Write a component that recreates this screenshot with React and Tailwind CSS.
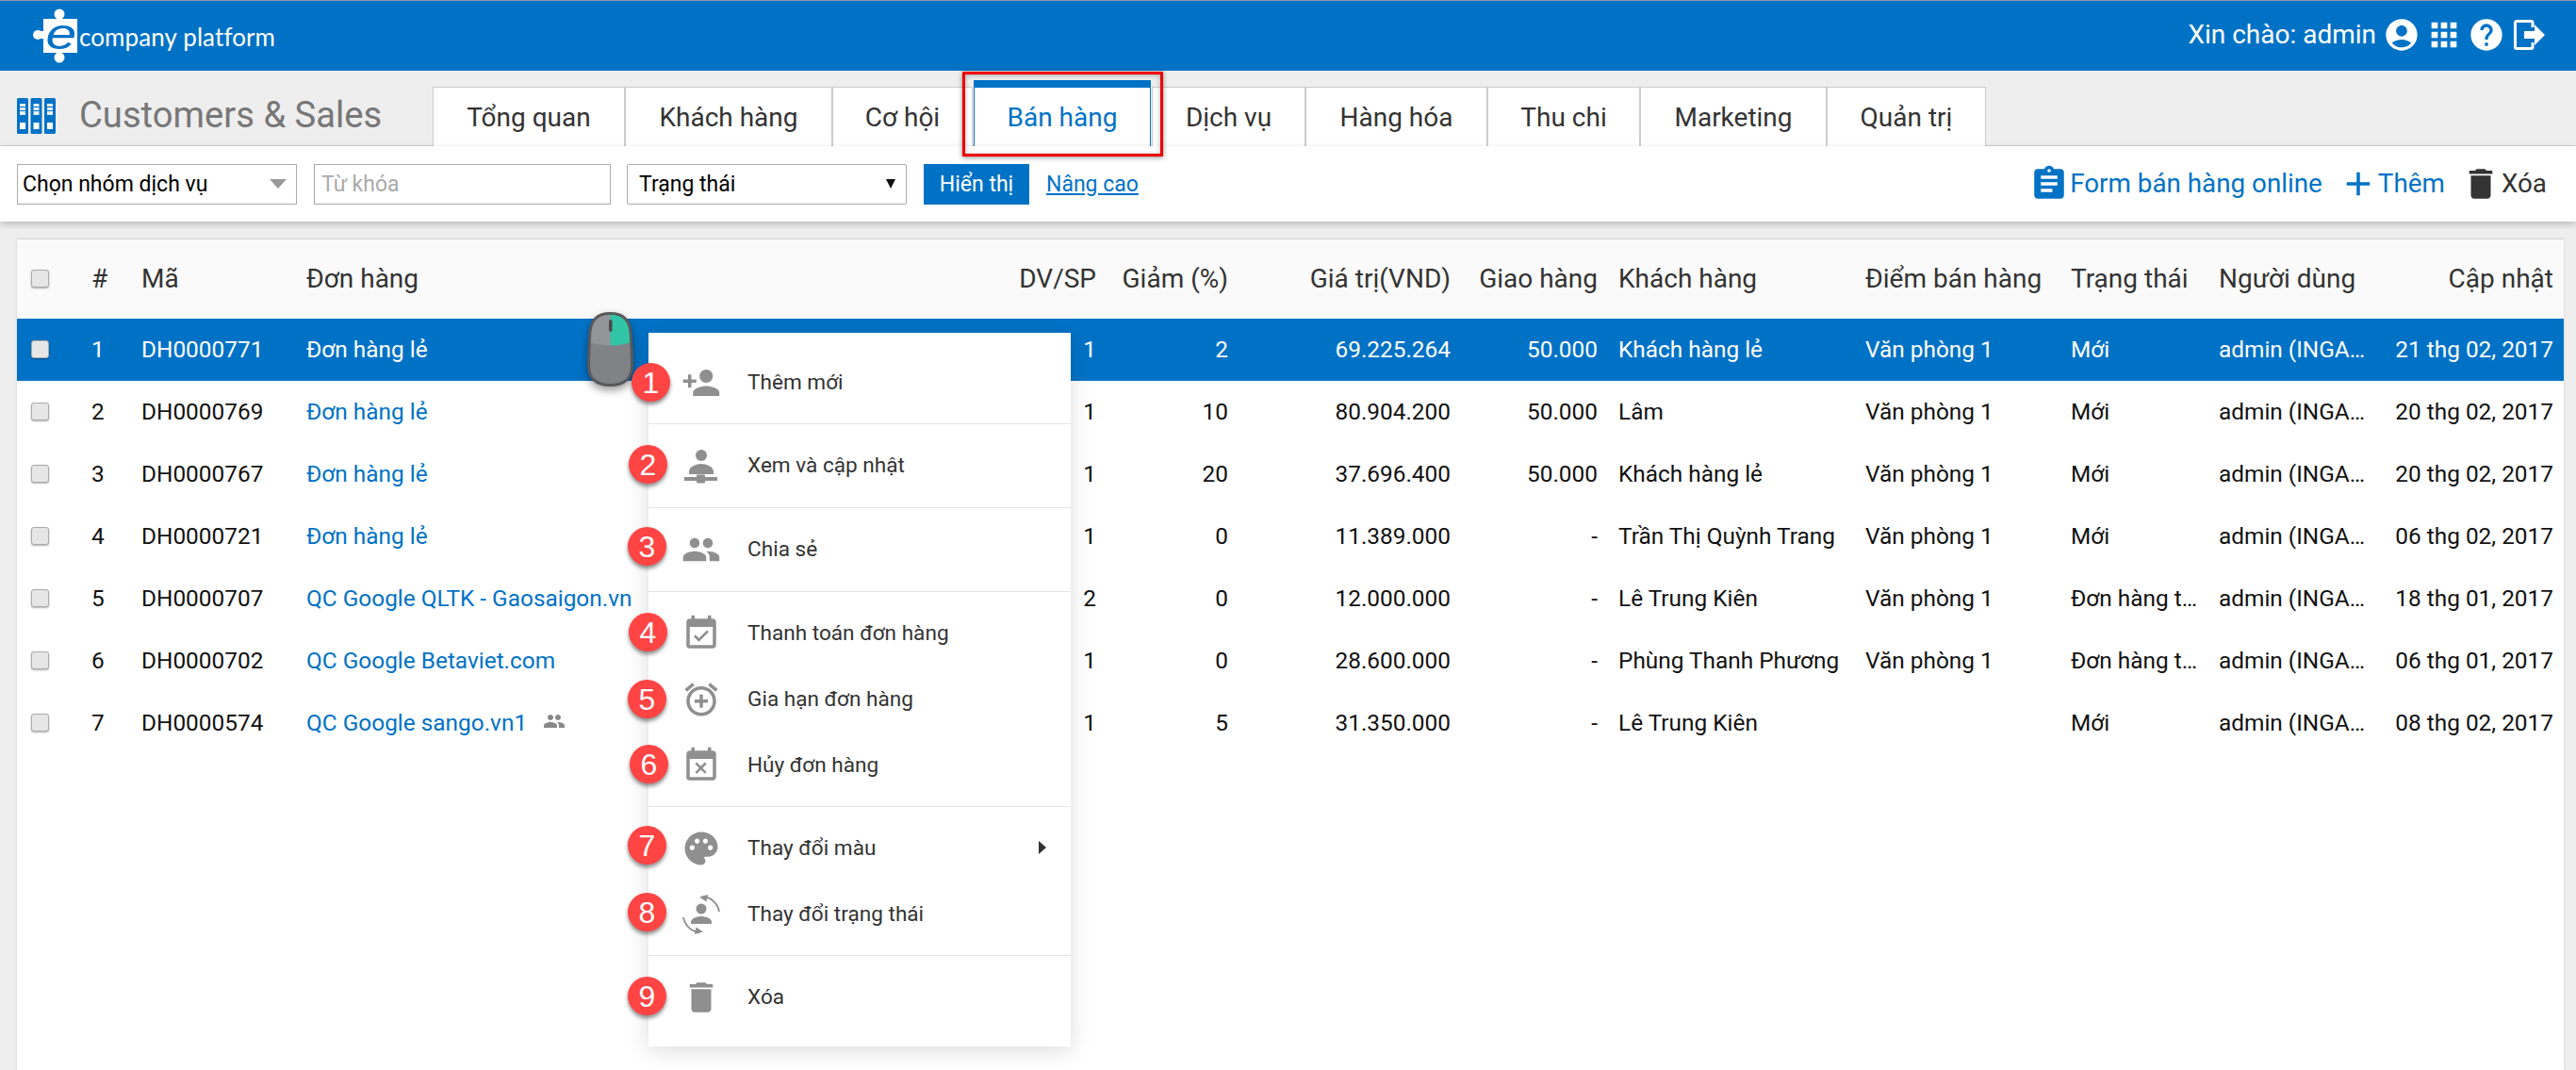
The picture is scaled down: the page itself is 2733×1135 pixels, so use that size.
import React from "react";
import {
  MdPersonAdd, MdPeople, MdEventAvailable, MdAddAlarm, MdEventBusy, MdPalette, MdDelete,
  MdAccountCircle, MdApps, MdHelp, MdAssignment, MdAdd,
} from "react-icons/md";

const TABS = [
  { t: "Tổng quan", w: "w-[204px]" },
  { t: "Khách hàng", w: "w-[220px]" },
  { t: "Cơ hội", w: "w-[149px]" },
  { t: "Bán hàng", w: "w-[188px] mx-px", active: true },
  { t: "Dịch vụ", w: "w-[163px]" },
  { t: "Hàng hóa", w: "w-[193px]" },
  { t: "Thu chi", w: "w-[162px]" },
  { t: "Marketing", w: "w-[198px]" },
  { t: "Quản trị", w: "w-[169px]" },
];

const ROWS = [
  ["1", "DH0000771", "Đơn hàng lẻ", "1", "2", "69.225.264", "50.000", "Khách hàng lẻ", "Văn phòng 1", "Mới", "admin (INGA…", "21 thg 02, 2017"],
  ["2", "DH0000769", "Đơn hàng lẻ", "1", "10", "80.904.200", "50.000", "Lâm", "Văn phòng 1", "Mới", "admin (INGA…", "20 thg 02, 2017"],
  ["3", "DH0000767", "Đơn hàng lẻ", "1", "20", "37.696.400", "50.000", "Khách hàng lẻ", "Văn phòng 1", "Mới", "admin (INGA…", "20 thg 02, 2017"],
  ["4", "DH0000721", "Đơn hàng lẻ", "1", "0", "11.389.000", "-", "Trần Thị Quỳnh Trang", "Văn phòng 1", "Mới", "admin (INGA…", "06 thg 02, 2017"],
  ["5", "DH0000707", "QC Google QLTK - Gaosaigon.vn", "2", "0", "12.000.000", "-", "Lê Trung Kiên", "Văn phòng 1", "Đơn hàng t…", "admin (INGA…", "18 thg 01, 2017"],
  ["6", "DH0000702", "QC Google Betaviet.com", "1", "0", "28.600.000", "-", "Phùng Thanh Phương", "Văn phòng 1", "Đơn hàng t…", "admin (INGA…", "06 thg 01, 2017"],
  ["7", "DH0000574", "QC Google sango.vn1", "1", "5", "31.350.000", "-", "Lê Trung Kiên", "", "Mới", "admin (INGA…", "08 thg 02, 2017"],
];

function Logo() {
  return (
    <div className="flex items-center h-full pl-[34px]">
      <svg width="50" height="58" viewBox="0 0 50 58" className="shrink-0">
        <circle cx="29" cy="6" r="5.500" fill="#fff" />
        <circle cx="29" cy="52" r="5.500" fill="#fff" />
        <circle cx="6" cy="28" r="5" fill="#fff" />
        <path d="M26 6h6v5h16v36H32v5h-6v-5H12V32H6v-8h6V11h14z" fill="#fff" />
        <text transform="translate(14.500 43) scale(1.25 1)" fontFamily="'Liberation Sans', sans-serif" fontStyle="italic" fontSize="47" fill="#0072c6">e</text>
      </svg>
      <span className="font-['Lato',sans-serif] font-normal text-[26px] text-white tracking-[0.1px] mt-[1px] leading-none whitespace-nowrap">company platform</span>
    </div>
  );
}

function Binders() {
  return (
    <svg width="41" height="38" viewBox="0 0 41 38" className="shrink-0">
      {[0, 14.5, 29].map((x) => (
        <g key={x}>
          <rect x={x} y="0" width="12" height="38" rx="1.5" fill="#0072c6" />
          <rect x={x + 3} y="6" width="6" height="12" fill="#e8eef4" />
          <rect x={x + 3} y="9" width="6" height="1" fill="#0072c6" />
          <rect x={x + 3} y="13" width="6" height="1" fill="#0072c6" />
          <rect x={x + 3} y="26" width="6" height="7" fill="#fff" />
        </g>
      ))}
    </svg>
  );
}

function Logout() {
  return (
    <svg width="33" height="32" viewBox="0 0 33 32" fill="none">
      <path d="M20 8V3a1.5 1.5 0 0 0-1.5-1.5H3A1.5 1.5 0 0 0 1.5 3v26A1.5 1.5 0 0 0 3 30.500h15.500A1.500 1.500 0 0 0 20 29v-5" stroke="#fff" strokeWidth="3" />
      <path d="M11 12h11V5l11 11-11 11v-7H11z" fill="#fff" />
    </svg>
  );
}

function Checkbox() {
  return <span className="block w-[19px] h-[19px] -mt-[2px] rounded-[3px] border border-[#aaaaaa] bg-[#e6e6e6] shadow-[0_1px_2px_rgba(0,0,0,0.3)]" />;
}

function NetworkUser() {
  return (
    <svg width="42" height="42" viewBox="0 0 42 42" fill="#8f8f8f">
      <circle cx="21" cy="10" r="6" />
      <path d="M8 30v-3c0-5 8-8 13-8s13 3 13 8v3z" />
      <rect x="3" y="33" width="35" height="4" />
      <rect x="16" y="30.500" width="9" height="9" rx="1" />
    </svg>
  );
}

function StatusUser() {
  return (
    <svg width="42" height="42" viewBox="0 0 42 42" fill="#8f8f8f">
      <circle cx="21" cy="15" r="5.500" />
      <path d="M10 31v-2c0-4 7-6 11-6s11 2 11 6v2z" />
      <path d="M23 2a19.500 19.500 0 0 1 17 16" stroke="#8f8f8f" strokeWidth="1.800" fill="none" />
      <path d="M19 2.500L28 0l-1.500 7.500z" />
      <path d="M19 40a19.500 19.500 0 0 1-17-16" stroke="#8f8f8f" strokeWidth="1.800" fill="none" />
      <path d="M23 39.500L14 42l1.500-7.500z" />
    </svg>
  );
}

function Mouse() {
  return (
    <svg width="49" height="79" viewBox="0 0 49 79">
      <path d="M24.500 1.500C11 1.500 4 8 3 22c-1 12-1.500 24-1.500 35 0 14 9 20.500 23 20.500s23-6.500 23-20.500c0-11-.5-23-1.500-35C45 8 38 1.500 24.500 1.500z" fill="#808285" stroke="#58595b" strokeWidth="3" />
      <path d="M24.500 3C12 3 5.500 9 4.500 22c-.3 3.500-.5 7-.7 10.500C10 34.500 17 35.500 24.500 35.500z" fill="#939598" />
      <path d="M24.500 3C37 3 43.500 9 44.500 22c.3 3.500.5 7 .7 10.500C39 34.500 32 35.500 24.500 35.500z" fill="#30c5a5" />
      <rect x="23" y="8" width="3.500" height="13" rx="1.750" fill="#4a4b4d" />
    </svg>
  );
}

const GROUPS = [
  { cls: "pt-[9px] pb-[8px] border-b", items: [{ t: "Thêm mới", i: <MdPersonAdd size={42} /> }] },
  { cls: "pt-[9px] pb-[9px] border-b", items: [{ t: "Xem và cập nhật", i: <NetworkUser /> }] },
  { cls: "pt-[9px] pb-[9px] border-b", items: [{ t: "Chia sẻ", i: <MdPeople size={42} /> }] },
  {
    cls: "pt-[9px] pb-[8px] border-b",
    items: [
      { t: "Thanh toán đơn hàng", i: <MdEventAvailable size={42} /> },
      { t: "Gia hạn đơn hàng", i: <MdAddAlarm size={42} /> },
      { t: "Hủy đơn hàng", i: <MdEventBusy size={42} /> },
    ],
  },
  {
    cls: "pt-[9px] pb-[8px] border-b",
    items: [
      { t: "Thay đổi màu", i: <MdPalette size={42} />, sub: true },
      { t: "Thay đổi trạng thái", i: <StatusUser /> },
    ],
  },
  { cls: "pt-[9px] pb-[8px]", items: [{ t: "Xóa", i: <MdDelete size={42} /> }] },
];

const BADGES = [
  ["1", "left-[670px] top-[385px]"],
  ["2", "left-[667px] top-[472px]"],
  ["3", "left-[666px] top-[559px]"],
  ["4", "left-[667px] top-[650px]"],
  ["5", "left-[666px] top-[721px]"],
  ["6", "left-[668px] top-[790px]"],
  ["7", "left-[666px] top-[876px]"],
  ["8", "left-[666px] top-[947px]"],
  ["9", "left-[666px] top-[1036px]"],
];

function ContextMenu() {
  return (
    <div className="absolute left-[688px] top-[353px] w-[448px] bg-white py-[9px] shadow-[0_4px_22px_rgba(0,0,0,0.14)]">
      {GROUPS.map((g, gi) => (
        <div key={gi} className={`${g.cls} border-[#e4e4e4]`}>
          {g.items.map((it) => (
            <div key={it.t} className="h-[70px] flex items-center pl-[35px] pr-[26px] text-[22.600px] text-[#333333]">
              <span className="w-[42px] h-[42px] flex items-center justify-center text-[#8f8f8f] shrink-0">{it.i}</span>
              <span className="ml-[28px] flex-1">{it.t}</span>
              {it.sub && (
                <svg width="8" height="14" viewBox="0 0 8 14" className="shrink-0 -mt-[2px]">
                  <path d="M0 0l8 7-8 7z" fill="#333333" />
                </svg>
              )}
            </div>
          ))}
        </div>
      ))}
    </div>
  );
}

const COLS = ["w-[79px]", "w-[53px]", "w-[175px]", "w-[750px]", "w-[88px]", "w-[140px]", "w-[236px]", "w-[156px]", "w-[284px]", "w-[218px]", "w-[157px]", "w-[156px]", "w-[210px]"];

function Table() {
  const th = "font-normal h-[84px] align-middle text-[#333333] text-[28px] whitespace-nowrap";
  return (
    <table className="w-full table-fixed border-collapse">
      <colgroup>
        {COLS.map((c, i) => <col key={i} className={c} />)}
      </colgroup>
      <thead className="bg-[#fafafa]">
        <tr>
          <th className={`${th} text-left pl-[15px]`}><Checkbox /></th>
          <th className={`${th} text-left`}>#</th>
          <th className={`${th} text-left`}>Mã</th>
          <th className={`${th} text-left`}>Đơn hàng</th>
          <th className={`${th} text-right`}>DV/SP</th>
          <th className={`${th} text-right`}>Giảm (%)</th>
          <th className={`${th} text-right`}>Giá trị(VND)</th>
          <th className={`${th} text-right`}>Giao hàng</th>
          <th className={`${th} text-left pl-[22px]`}>Khách hàng</th>
          <th className={`${th} text-left`}>Điểm bán hàng</th>
          <th className={`${th} text-left`}>Trạng thái</th>
          <th className={`${th} text-left`}>Người dùng</th>
          <th className={`${th} text-right pr-[11px]`}>Cập nhật</th>
        </tr>
      </thead>
      <tbody>
        {ROWS.map((r, i) => {
          const sel = i === 0;
          const td = "h-[66px] align-middle whitespace-nowrap";
          return (
            <tr key={r[0]} className={sel ? "bg-[#0072c6] text-white" : "bg-white text-[#111111]"}>
              <td className={`${td} pl-[15px]`}><Checkbox /></td>
              <td className={td}>{r[0]}</td>
              <td className={td}>{r[1]}</td>
              <td className={`${td} ${sel ? "text-white" : "text-[#0072c6]"}`}>
                <span className="inline-flex items-center">
                  {r[2]}
                  {i === 6 && <MdPeople size={24} className="text-[#888888] ml-[17px] -mt-[4px]" />}
                </span>
              </td>
              <td className={`${td} text-right`}>{r[3]}</td>
              <td className={`${td} text-right`}>{r[4]}</td>
              <td className={`${td} text-right`}>{r[5]}</td>
              <td className={`${td} text-right`}>{r[6]}</td>
              <td className={`${td} pl-[22px]`}>{r[7]}</td>
              <td className={td}>{r[8]}</td>
              <td className={td}>{r[9]}</td>
              <td className={td}>{r[10]}</td>
              <td className={`${td} text-right pr-[11px]`}>{r[11]}</td>
            </tr>
          );
        })}
      </tbody>
    </table>
  );
}

export default function App() {
  return (
    <div className="relative w-full h-[1135px] overflow-hidden flex flex-col bg-[#eeeeee] font-['Roboto',sans-serif] text-[24.400px] leading-none">
      <header className="h-[75px] shrink-0 bg-[#0072c6] border-t border-[#8f9aa5] flex items-center justify-between">
        <Logo />
        <div className="flex items-center gap-[5px] pr-[33px] text-white -mt-[2px]">
          <span className="text-[28px] mr-[2px]">Xin chào: admin</span>
          <MdAccountCircle size={40} />
          <MdApps size={40} />
          <MdHelp size={40} />
          <span className="ml-[4px] flex"><Logout /></span>
        </div>
      </header>

      <div className="h-[80px] shrink-0 bg-[#eeeeee] border-b border-[#cccccc] flex items-end">
        <div className="w-[459px] shrink-0 h-full flex items-center pl-[18px] pt-[16px]">
          <Binders />
          <span className="ml-[25px] text-[38.200px] text-[#777777] whitespace-nowrap">Customers &amp; Sales</span>
        </div>
        <nav className="flex items-end -mb-px">
          {TABS.map((t) =>
            t.active ? (
              <div key={t.t} className={`${t.w} h-[70px] bg-white border-t-[8px] border-x border-[#0072c6] text-[#0072c6] text-[28px] flex items-center justify-center shrink-0 pt-[2px]`}>{t.t}</div>
            ) : (
              <div key={t.t} className={`${t.w} h-[63px] bg-white border border-b-0 border-[#cccccc] text-[#333333] text-[28px] flex items-center justify-center shrink-0 pt-[2px]`}>{t.t}</div>
            )
          )}
        </nav>
      </div>

      <div className="relative h-[80px] shrink-0 bg-white shadow-[0_3px_7px_rgba(0,0,0,0.22)] flex items-center justify-between pl-[18px] pr-[31px]">
        <div className="flex items-center text-[23px]">
          <div className="w-[297px] h-[43px] border border-[#aaaaaa] flex items-center justify-between pl-[5px] pr-[10px] text-black">
            <span>Chọn nhóm dịch vụ</span>
            <svg width="18" height="10" viewBox="0 0 18 10"><path d="M0 0h18L9 10z" fill="#999999" /></svg>
          </div>
          <input placeholder="Từ khóa" className="ml-[18px] w-[315px] h-[43px] border border-[#aaaaaa] px-[7px] bg-white outline-none placeholder:text-[#aaaaaa]" />
          <div className="ml-[17px] w-[297px] h-[43px] border border-[#aaaaaa] rounded-[2px] flex items-center justify-between pl-[12px] pr-[11px] text-black">
            <span>Trạng thái</span>
            <svg width="10" height="10" viewBox="0 0 10 10"><path d="M0 0h10L5 10z" fill="#111111" /></svg>
          </div>
          <button className="ml-[18px] w-[112px] h-[43px] bg-[#0072c6] text-white">Hiển thị</button>
          <a className="ml-[18px] text-[#0072c6] underline">Nâng cao</a>
        </div>
        <div className="flex items-center text-[27.800px] gap-[17px] -mt-[1px]">
          <span className="flex items-center text-[#0072c6]"><MdAssignment size={42} /><span className="ml-[1px]">Form bán hàng online</span></span>
          <span className="flex items-center text-[#0072c6]"><MdAdd size={42} /><span>Thêm</span></span>
          <span className="flex items-center text-[#333333]"><MdDelete size={42} /><span className="ml-[1px]">Xóa</span></span>
        </div>
      </div>

      <main className="flex-1 mt-[18px] ml-[18px] mr-[13px] bg-white border-t border-[#d5d5d5] shadow-[0_1px_3px_rgba(0,0,0,0.12)]">
        <Table />
      </main>

      <ContextMenu />

      <div className="absolute left-[623px] top-[331px] drop-shadow-[0_4px_4px_rgba(0,0,0,0.4)]"><Mouse /></div>

      {BADGES.map(([n, pos]) => (
        <span key={n} className={`absolute ${pos} w-[41px] h-[41px] rounded-full bg-[#ff4444] text-white flex items-center justify-center font-['Liberation_Sans',sans-serif] text-[32px] shadow-[0_3px_4px_rgba(0,0,0,0.45)]`}>{n}</span>
      ))}

      <div className="absolute left-[1021px] top-[76px] w-[213px] h-[90px] border-[3px] border-[#ee0000] shadow-[0_1px_5px_rgba(0,0,0,0.45),inset_0_1px_5px_rgba(0,0,0,0.3)] pointer-events-none" />
    </div>
  );
}
